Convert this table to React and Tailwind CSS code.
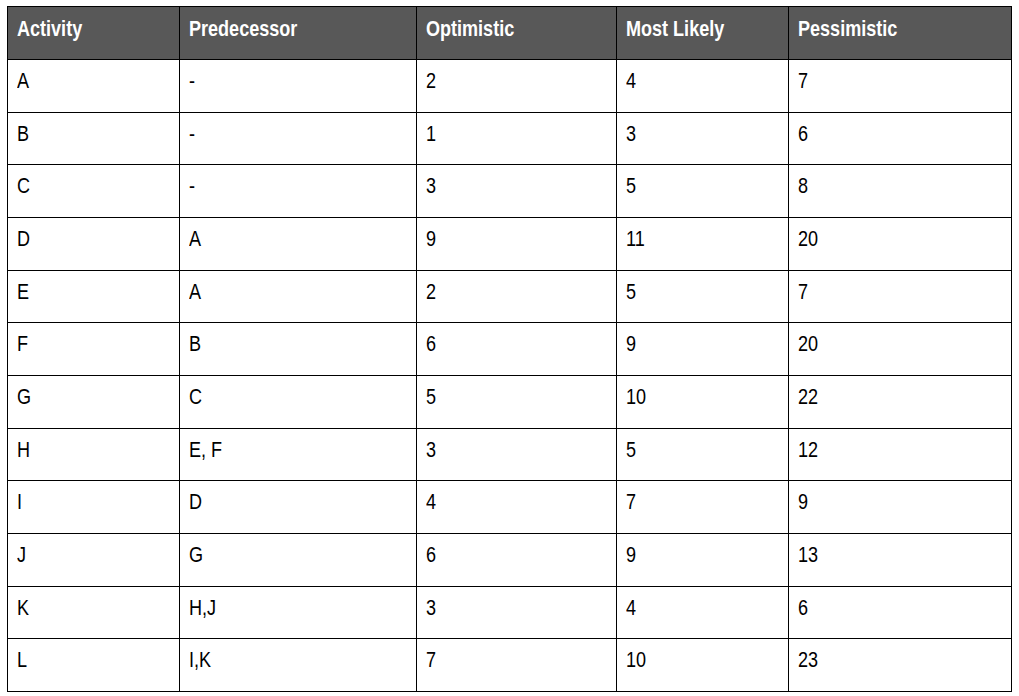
const rows = [
  ["A", "-", "2", "4", "7"],
  ["B", "-", "1", "3", "6"],
  ["C", "-", "3", "5", "8"],
  ["D", "A", "9", "11", "20"],
  ["E", "A", "2", "5", "7"],
  ["F", "B", "6", "9", "20"],
  ["G", "C", "5", "10", "22"],
  ["H", "E, F", "3", "5", "12"],
  ["I", "D", "4", "7", "9"],
  ["J", "G", "6", "9", "13"],
  ["K", "H,J", "3", "4", "6"],
  ["L", "I,K", "7", "10", "23"],
];

const headers = ["Activity", "Predecessor", "Optimistic", "Most Likely", "Pessimistic"];

// narrow face isn't installed, so squeeze the regular one
function Narrow({ children }) {
  return <span className="inline-block origin-left scale-x-[0.82] whitespace-nowrap">{children}</span>;
}

export default function App() {
  return (
    <div className="min-h-screen bg-white pt-[6px] pl-[7px] font-['Liberation_Sans',Arial,sans-serif]">
      <table className="w-[1004px] table-fixed border-collapse border border-black text-[22px] leading-6">
        <colgroup>
          <col className="w-[172px]" />
          <col className="w-[237px]" />
          <col className="w-[200px]" />
          <col className="w-[172px]" />
          <col className="w-[223px]" />
        </colgroup>
        <thead>
          <tr className="h-[53px] bg-[#585858]">
            {headers.map((h) => (
              <th
                key={h}
                className="border border-black px-[9px] pt-[10px] text-left align-top font-bold text-white"
              >
                <Narrow>{h}</Narrow>
              </th>
            ))}
          </tr>
        </thead>
        <tbody>
          {rows.map((r) => (
            <tr key={r[0]} className="h-[52.67px]">
              {r.map((c, i) => (
                <td
                  key={i}
                  className="border border-black px-[9px] pt-[9px] align-top text-black"
                >
                  <Narrow>{c}</Narrow>
                </td>
              ))}
            </tr>
          ))}
        </tbody>
      </table>
    </div>
  );
}
